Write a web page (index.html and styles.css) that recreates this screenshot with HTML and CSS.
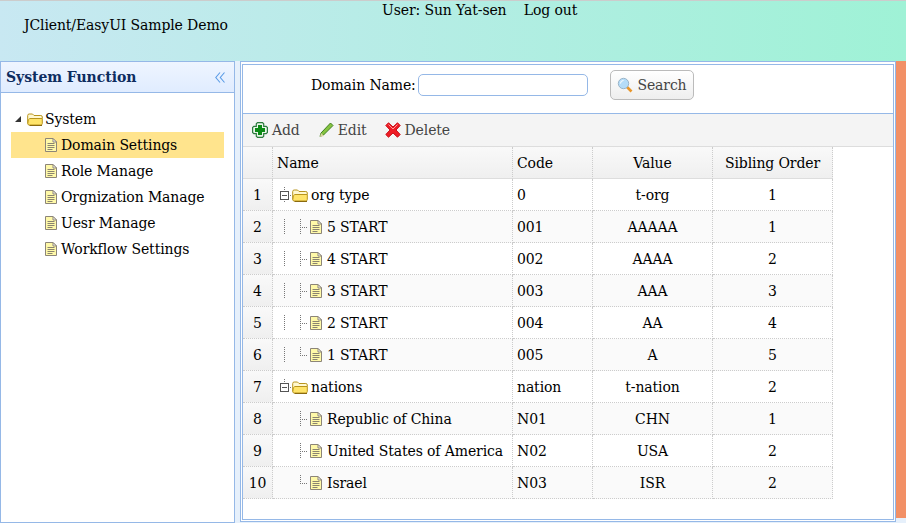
FILE: index.html
```html
<!DOCTYPE html>
<html lang="en">
<head>
    <meta charset="UTF-8">
    <title>JClient/EasyUI Sample Demo</title>
    <link rel="stylesheet" href="styles.css">
</head>
<body>
    <svg class="defs" width="0" height="0">
        <symbol id="i-folder" viewBox="0 0 16 16">
            <path d="M.7 12.500V4.500q0-1.500 1.500-1.500h3.300l1.500 1.500h6.800q1.500 0 1.500 1.500v1.500" fill="#fff8d0" stroke="#b8941e"/>
            <path d="M.8 12.800q0-5.300 2-5.300h12.500v5q0 1.500-1.500 1.500H2.300q-1.500 0-1.500-1.200z" fill="#ffe46a" stroke="#b8941e"/>
            <path d="M2.500 14.500h12.500" stroke="#8a6a10" fill="none"/>
        </symbol>
        <symbol id="i-file" viewBox="0 0 16 16">
            <path d="M2.500 1.500h7.500l3.500 3.500v9.500h-11z" fill="#fff9a8" stroke="#8c8578"/>
            <path d="M10 1.500v3.500h3.500z" fill="#fff" stroke="#8c8578"/>
            <path d="M4.500 6.500h7M4.500 8.500h7M4.500 10.500h7M4.500 12.500h5" stroke="#8a8470" fill="none"/>
        </symbol>
        <symbol id="i-add" viewBox="0 0 16 16">
            <path d="M5.500 .6h5l1.200 1.200v2.500h2.500l1.200 1.200v5l-1.200 1.200h-2.500v2.500l-1.200 1.200h-5l-1.200-1.200v-2.500H1.800L.6 10.500v-5l1.200-1.200h2.500V1.800z" fill="#e8f5e8" stroke="#2b7a3d" stroke-width="1.200"/>
            <path d="M6 3h4v3h3v4h-3v3H6v-3H3V6h3z" fill="#0b8a14"/>
        </symbol>
        <symbol id="i-edit" viewBox="0 0 16 16">
            <path d="M12.500 1l2.500 2.500-9.500 9.500-3.500 1.500 1-3.500z" fill="#86c440" stroke="#3f7f20"/>
            <path d="M2 15l1-4 3 3z" fill="#d8d4a0"/>
        </symbol>
        <symbol id="i-del" viewBox="0 0 16 16">
            <path d="M3.500 .8L8 5 12.500 .8 15.200 3.500 11 8l4.200 4.500-2.700 2.700L8 11l-4.500 4.200-2.700-2.700L5 8 .8 3.500z" fill="#ee1c25" stroke="#c81018" stroke-linejoin="round"/>
            <path d="M3.500 2.500L8 7l4.500-4.500" stroke="#ff9a9a" fill="none"/>
        </symbol>
        <symbol id="i-search" viewBox="0 0 16 16">
            <path d="M9.500 9.500l5 5" stroke="#e8962a" stroke-width="2.600"/>
            <circle cx="6.500" cy="6.500" r="5.200" fill="#b5dcf8" stroke="#9ab4c8"/>
            <path d="M3.500 6.500a3 3 0 0 1 3-3" stroke="#fff" fill="none"/>
        </symbol>
        <symbol id="i-collapse" viewBox="0 0 10 11">
            <path d="M5 .5L.8 5.500 5 10.500M9.500 .5L5.300 5.500 9.500 10.500" fill="none" stroke="#5a9be6" stroke-width="1.100"/>
        </symbol>
    </svg>

    <header class="top">
        <div class="top-title">JClient/EasyUI Sample Demo</div>
        <div class="top-user">User: Sun Yat-sen <a class="logout">Log out</a></div>
    </header>

    <main class="layout">
        <aside class="west">
            <div class="panel-title">
                <span>System Function</span>
                <svg class="collapse"><use href="#i-collapse"/></svg>
            </div>
            <ul class="side-tree">
                <li class="node node-root"><i class="arrow"></i><svg class="icon"><use href="#i-folder"/></svg><span class="root-label">System</span></li>
                <li class="node selected"><svg class="icon"><use href="#i-file"/></svg><span>Domain Settings</span></li>
                <li class="node"><svg class="icon"><use href="#i-file"/></svg><span>Role Manage</span></li>
                <li class="node"><svg class="icon"><use href="#i-file"/></svg><span>Orgnization Manage</span></li>
                <li class="node"><svg class="icon"><use href="#i-file"/></svg><span>Uesr Manage</span></li>
                <li class="node"><svg class="icon"><use href="#i-file"/></svg><span>Workflow Settings</span></li>
            </ul>
        </aside>

        <section class="center">
            <div class="center-inner">
                <form class="search-bar">
                    <label class="search-label">Domain Name:</label>
                    <input type="text" class="search-input">
                    <button type="button" class="search-btn"><svg class="icon"><use href="#i-search"/></svg>Search</button>
                </form>
                <div class="toolbar">
                    <a class="tool tool-add"><svg class="icon"><use href="#i-add"/></svg>Add</a>
                    <a class="tool tool-edit"><svg class="icon"><use href="#i-edit"/></svg>Edit</a>
                    <a class="tool tool-del"><svg class="icon"><use href="#i-del"/></svg>Delete</a>
                </div>
                <table class="grid">
                    <thead>
                        <tr>
                            <th class="num"></th>
                            <th class="name">Name</th>
                            <th class="code">Code</th>
                            <th class="val">Value</th>
                            <th class="order">Sibling Order</th>
                        </tr>
                    </thead>
                    <tbody>
                        <tr>
                            <td class="num">1</td>
                            <td><div class="tree-cell"><i class="ln ln-box"></i><svg class="icon"><use href="#i-folder"/></svg><span class="lbl-folder">org type</span></div></td>
                            <td class="code">0</td><td class="val">t-org</td><td class="order">1</td>
                        </tr>
                        <tr class="alt">
                            <td class="num">2</td>
                            <td><div class="tree-cell"><i class="ln ln-v"></i><i class="ln ln-t"></i><svg class="icon"><use href="#i-file"/></svg><span class="lbl-file">5 START</span></div></td>
                            <td class="code">001</td><td class="val">AAAAA</td><td class="order">1</td>
                        </tr>
                        <tr>
                            <td class="num">3</td>
                            <td><div class="tree-cell"><i class="ln ln-v"></i><i class="ln ln-t"></i><svg class="icon"><use href="#i-file"/></svg><span class="lbl-file">4 START</span></div></td>
                            <td class="code">002</td><td class="val">AAAA</td><td class="order">2</td>
                        </tr>
                        <tr class="alt">
                            <td class="num">4</td>
                            <td><div class="tree-cell"><i class="ln ln-v"></i><i class="ln ln-t"></i><svg class="icon"><use href="#i-file"/></svg><span class="lbl-file">3 START</span></div></td>
                            <td class="code">003</td><td class="val">AAA</td><td class="order">3</td>
                        </tr>
                        <tr>
                            <td class="num">5</td>
                            <td><div class="tree-cell"><i class="ln ln-v"></i><i class="ln ln-t"></i><svg class="icon"><use href="#i-file"/></svg><span class="lbl-file">2 START</span></div></td>
                            <td class="code">004</td><td class="val">AA</td><td class="order">4</td>
                        </tr>
                        <tr class="alt">
                            <td class="num">6</td>
                            <td><div class="tree-cell"><i class="ln ln-v"></i><i class="ln ln-l"></i><svg class="icon"><use href="#i-file"/></svg><span class="lbl-file">1 START</span></div></td>
                            <td class="code">005</td><td class="val">A</td><td class="order">5</td>
                        </tr>
                        <tr>
                            <td class="num">7</td>
                            <td><div class="tree-cell"><i class="ln ln-box ln-box-last"></i><svg class="icon"><use href="#i-folder"/></svg><span class="lbl-folder">nations</span></div></td>
                            <td class="code">nation</td><td class="val">t-nation</td><td class="order">2</td>
                        </tr>
                        <tr class="alt">
                            <td class="num">8</td>
                            <td><div class="tree-cell"><i class="ln"></i><i class="ln ln-t"></i><svg class="icon"><use href="#i-file"/></svg><span class="lbl-file">Republic of China</span></div></td>
                            <td class="code">N01</td><td class="val">CHN</td><td class="order">1</td>
                        </tr>
                        <tr>
                            <td class="num">9</td>
                            <td><div class="tree-cell"><i class="ln"></i><i class="ln ln-t"></i><svg class="icon"><use href="#i-file"/></svg><span class="lbl-file">United States of America</span></div></td>
                            <td class="code">N02</td><td class="val">USA</td><td class="order">2</td>
                        </tr>
                        <tr class="alt">
                            <td class="num">10</td>
                            <td><div class="tree-cell"><i class="ln"></i><i class="ln ln-l"></i><svg class="icon"><use href="#i-file"/></svg><span class="lbl-file">Israel</span></div></td>
                            <td class="code">N03</td><td class="val">ISR</td><td class="order">2</td>
                        </tr>
                    </tbody>
                </table>
            </div>
        </section>

        <div class="east"></div>
    </main>
</body>
</html>
```

FILE: styles.css
```css
* {
    box-sizing: border-box;
}

html,
body {
    height: 100%;
}

body {
    margin: 0;
    display: flex;
    flex-direction: column;
    overflow: hidden;
    border-top: 1px solid #ccc;
    background-color: #e6e6e6;
    font-family: "DejaVu Serif", serif;
    font-size: 14px;
    letter-spacing: -0.12px;
    color: #000;
}

.defs {
    position: absolute;
}

.icon {
    width: 16px;
    height: 16px;
    flex: none;
}

/* top banner */
.top {
    flex: none;
    height: 60px;
    display: flex;
    background: linear-gradient(to right, #c8e8f2, #9ff2d6);
}

.top-title {
    width: 382px;
    padding: 16px 0 0 24px;
}

.top-user {
    line-height: 18px;
}

.logout {
    margin-left: 13px;
}

/* main area */
.layout {
    flex: 1;
    display: flex;
    min-height: 0;
    background-color: #e6f0fb;
}

.west {
    width: 235px;
    flex: none;
    border: 1px solid #95b8e7;
    background-color: #fff;
}

.panel-title {
    height: 31px;
    display: flex;
    justify-content: space-between;
    align-items: center;
    padding: 0 9px 0 5px;
    border-bottom: 1px solid #95b8e7;
    background: linear-gradient(to bottom, #eff5ff, #e0ecff);
    font-weight: bold;
    letter-spacing: -0.05px;
    color: #0e2d5f;
}

.collapse {
    width: 10px;
    height: 11px;
}

.side-tree {
    list-style: none;
    margin: 13px 10px 0;
    padding: 0;
}

.node {
    height: 26px;
    display: flex;
    align-items: center;
    padding-left: 32px;
}

.node span {
    margin-left: 2px;
}

.node-root {
    padding-left: 4px;
}

.arrow {
    width: 0;
    height: 0;
    margin-right: 6px;
    border-style: solid;
    border-width: 0 0 6px 6px;
    border-color: transparent transparent #333 transparent;
}

.selected {
    background-color: #ffe48d;
}

.center {
    width: 656px;
    flex: none;
    margin-left: 5px;
    margin-bottom: 1px;
    padding: 2px 1px 1px;
    border: 1px solid #95b8e7;
    background-color: #fff;
}

.center-inner {
    height: 100%;
    border: 1px solid #95b8e7;
    background-color: #fff;
}

.search-bar {
    height: 49px;
    display: flex;
    align-items: center;
    padding: 0 0 8px 68px;
    border-bottom: 1px solid #95b8e7;
}

.search-label {
    width: 107px;
}

.search-input {
    width: 170px;
    height: 22px;
    border: 1px solid #95b8e7;
    border-radius: 5px;
}

.search-btn {
    width: 84px;
    height: 30px;
    margin-left: 22px;
    display: flex;
    align-items: center;
    justify-content: center;
    gap: 4px;
    padding: 0;
    border: 1px solid #bbb;
    border-radius: 5px;
    background: linear-gradient(to bottom, #fff, #eee);
    font-family: inherit;
    font-size: 14px;
    letter-spacing: inherit;
    color: #444;
}

.toolbar {
    height: 33px;
    display: flex;
    align-items: center;
    padding-left: 9px;
    gap: 18px;
    background-color: #f4f4f4;
    border-bottom: 1px solid #ddd;
    color: #444;
}

.tool {
    display: flex;
    align-items: center;
    gap: 4px;
}

/* data grid */
.grid {
    border-collapse: separate;
    border-spacing: 0;
    table-layout: fixed;
    width: 590px;
}

.grid th {
    height: 32px;
    padding: 0 4px;
    font-weight: normal;
    text-align: left;
    background: linear-gradient(to bottom, #f9f9f9, #efefef);
    border-right: 1px dotted #ccc;
    border-bottom: 1px solid #ddd;
}

.grid td {
    height: 32px;
    padding: 0 4px;
    white-space: nowrap;
    border-right: 1px dotted #ccc;
    border-bottom: 1px dotted #ccc;
}

.grid .num {
    width: 30px;
    padding: 0;
    text-align: center;
}

.grid td.num {
    background: linear-gradient(to bottom, #f9f9f9, #efefef);
}

.grid .name {
    width: 240px;
}

.grid .code {
    width: 80px;
}

.grid .val,
.grid .order {
    width: 120px;
    text-align: center;
}

.alt td {
    background-color: #fafafa;
}

.tree-cell {
    display: flex;
    align-items: center;
    margin-left: -1px;
}

.ln {
    width: 16px;
    height: 16px;
    flex: none;
    display: block;
    background-repeat: no-repeat;
}

.ln-v {
    background-image: repeating-linear-gradient(to bottom, #777 0 1px, transparent 1px 2px);
    background-position: 8px 0;
    background-size: 1px 16px;
}

.ln-t {
    background-image:
        repeating-linear-gradient(to bottom, #777 0 1px, transparent 1px 2px),
        repeating-linear-gradient(to right, #777 0 1px, transparent 1px 2px);
    background-position: 8px 0, 8px 8px;
    background-size: 1px 16px, 8px 1px;
}

.ln-l {
    background-image:
        repeating-linear-gradient(to bottom, #777 0 1px, transparent 1px 2px),
        repeating-linear-gradient(to right, #777 0 1px, transparent 1px 2px);
    background-position: 8px 0, 8px 8px;
    background-size: 1px 9px, 8px 1px;
}

/* minus box with the dotted stub round it */
.ln-box {
    background-image:
        linear-gradient(#555, #555),
        linear-gradient(#fff, #fff),
        linear-gradient(#555, #555),
        repeating-linear-gradient(to bottom, #777 0 1px, transparent 1px 2px),
        repeating-linear-gradient(to right, #777 0 1px, transparent 1px 2px);
    background-position: 6px 8px, 5px 5px, 4px 4px, 8px 0, 8px 8px;
    background-size: 5px 1px, 7px 7px, 9px 9px, 1px 16px, 8px 1px;
}

.ln-box-last {
    background-size: 5px 1px, 7px 7px, 9px 9px, 1px 9px, 8px 1px;
}

.lbl-folder,
.lbl-file {
    margin-left: 3px;
}

.east {
    flex: 1;
    margin-bottom: 5px;
    background-color: #f29066;
}
```
